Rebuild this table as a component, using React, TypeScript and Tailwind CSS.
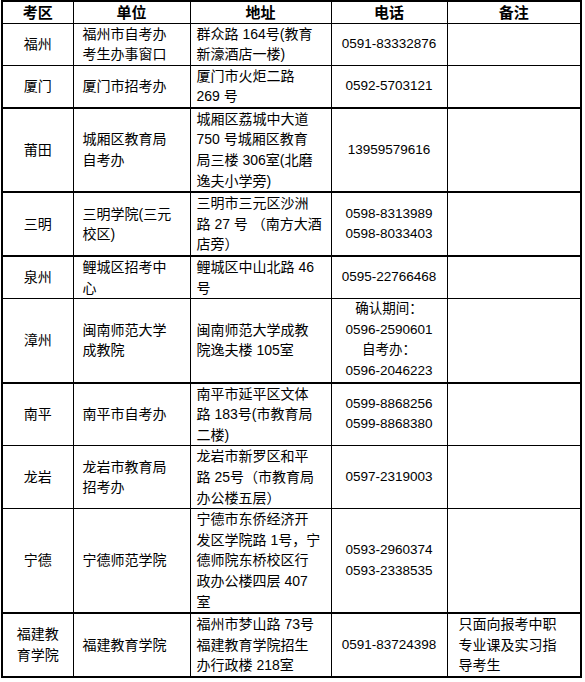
type Row = {
  area: string[];
  unit: string[];
  addr: string[];
  phone: string[];
  note?: string[];
  thick?: boolean;
};

const rows: Row[] = [
  { area: ["福州"], unit: ["福州市自考办", "考生办事窗口"], addr: ["群众路 164号(教育", "新濠酒店一楼)"], phone: ["0591-83332876"] },
  { area: ["厦门"], unit: ["厦门市招考办"], addr: ["厦门市火炬二路", "269 号"], phone: ["0592-5703121"], thick: true },
  {
    area: ["莆田"],
    unit: ["城厢区教育局", "自考办"],
    addr: ["城厢区荔城中大道", "750 号城厢区教育", "局三楼 306室(北磨", "逸夫小学旁)"],
    phone: ["13959579616"],
    thick: true,
  },
  {
    area: ["三明"],
    unit: ["三明学院(三元", "校区)"],
    addr: ["三明市三元区沙洲", "路 27 号 （南方大酒", "店旁）"],
    phone: ["0598-8313989", "0598-8033403"],
    thick: true,
  },
  { area: ["泉州"], unit: ["鲤城区招考中", "心"], addr: ["鲤城区中山北路 46", "号"], phone: ["0595-22766468"] },
  {
    area: ["漳州"],
    unit: ["闽南师范大学", "成教院"],
    addr: ["闽南师范大学成教", "院逸夫楼 105室"],
    phone: ["确认期间：", "0596-2590601", "自考办：", "0596-2046223"],
    thick: true,
  },
  {
    area: ["南平"],
    unit: ["南平市自考办"],
    addr: ["南平市延平区文体", "路 183号(市教育局", "二楼)"],
    phone: ["0599-8868256", "0599-8868380"],
  },
  {
    area: ["龙岩"],
    unit: ["龙岩市教育局", "招考办"],
    addr: ["龙岩市新罗区和平", "路 25号（市教育局", "办公楼五层）"],
    phone: ["0597-2319003"],
  },
  {
    area: ["宁德"],
    unit: ["宁德师范学院"],
    addr: ["宁德市东侨经济开", "发区学院路 1号，宁", "德师院东桥校区行", "政办公楼四层 407", "室"],
    phone: ["0593-2960374", "0593-2338535"],
    thick: true,
  },
  {
    area: ["福建教", "育学院"],
    unit: ["福建教育学院"],
    addr: ["福州市梦山路 73号", "福建教育学院招生", "办行政楼 218室"],
    phone: ["0591-83724398"],
    note: ["只面向报考中职", "专业课及实习指", "导考生"],
  },
];

function Lines({ items }: { items: string[] }) {
  return (
    <>
      {items.map((t, i) => (
        <div key={i} className="whitespace-nowrap h-[20.6px]">
          {t}
        </div>
      ))}
    </>
  );
}

export default function App() {
  return (
    <div className="bg-white w-[585px] h-[682px] pl-px font-['Liberation_Sans','Noto_Sans_CJK_SC',sans-serif] text-[14px] leading-[20px] text-black">
      <table className="w-[579px] table-fixed border-collapse border-2 border-black">
        <colgroup>
          <col className="w-[71px]" />
          <col className="w-[117px]" />
          <col className="w-[141px]" />
          <col className="w-[116px]" />
          <col className="w-[134px]" />
        </colgroup>
        <thead>
          <tr className="h-[22px] font-bold text-[15px]">
            <th className="border border-black p-0 leading-[19px]">考区</th>
            <th className="border border-black p-0 leading-[19px]">单位</th>
            <th className="border border-black p-0 leading-[19px]">地址</th>
            <th className="border border-black p-0 leading-[19px]">电话</th>
            <th className="border border-black p-0 leading-[19px]">备注</th>
          </tr>
        </thead>
        <tbody>
          {rows.map((r, i) => (
            <tr key={i} className={r.thick ? "[&>td]:border-b-2" : ""}>
              <td className="border border-black p-0 text-center align-middle">
                <Lines items={r.area} />
              </td>
              <td className="border border-black py-0 pl-[9px] pr-0 align-middle">
                <Lines items={r.unit} />
              </td>
              <td className="border border-black py-0 pl-[6px] pr-0 align-middle">
                <Lines items={r.addr} />
              </td>
              <td className="border border-black p-0 text-center align-middle text-[13.5px]">
                <Lines items={r.phone} />
              </td>
              <td className="border border-black py-0 pl-[11px] pr-0 align-middle">
                {r.note ? <Lines items={r.note} /> : null}
              </td>
            </tr>
          ))}
        </tbody>
      </table>
    </div>
  );
}
